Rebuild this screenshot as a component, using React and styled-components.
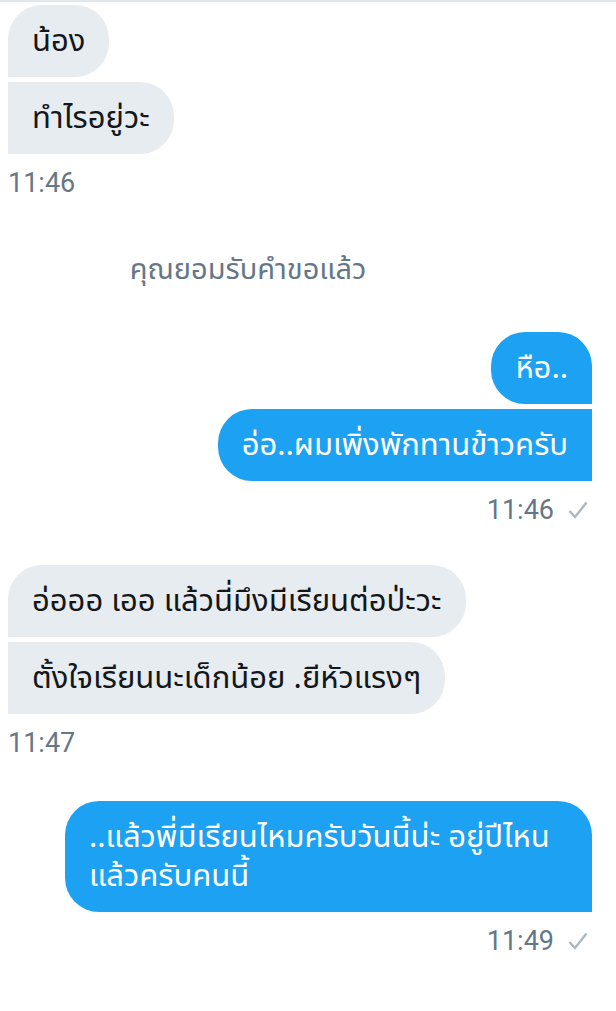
import styled, { createGlobalStyle } from "styled-components";

const GlobalStyle = createGlobalStyle`
  html, body {
    margin: 0;
    padding: 0;
    background: #ffffff;
  }
  body {
    font-family: "Noto Sans Thai", "Noto Sans", Roboto, sans-serif;
  }
`;

const Page = styled.div`
  width: 616px;
  min-height: 1011px;
  box-sizing: border-box;
  border-top: 2px solid #e1e8ed;
  padding: 3px 24px 0 8px;
  display: flex;
  flex-direction: column;
`;

const Group = styled.div`
  display: flex;
  flex-direction: column;
  align-items: ${(p) => (p.$mine ? "flex-end" : "flex-start")};
  gap: 5px;
  margin-top: ${(p) => p.$top || 0}px;
`;

const Bubble = styled.div`
  box-sizing: border-box;
  padding: 17px 24px 16px;
  font-size: 31px;
  line-height: 39px;
  max-width: 527px;
  background: ${(p) => (p.$mine ? "#1da1f2" : "#e6ecf0")};
  color: ${(p) => (p.$mine ? "#ffffff" : "#14171a")};
  border-radius: ${(p) => {
    const r = 34;
    const first = p.$first;
    if (p.$mine) {
      return `${r}px ${first ? r : 0}px 0 ${r}px`;
    }
    return `${first ? r : 0}px ${r}px ${r}px 0`;
  }};
`;

const Time = styled.div`
  display: flex;
  align-items: center;
  gap: 14px;
  margin-top: 9px;
  font-family: Roboto, "Noto Sans", sans-serif;
  font-size: 27px;
  line-height: 30px;
  color: #657786;
`;

const Check = styled.svg`
  width: 20px;
  height: 18px;
  margin-right: 4px;
`;

const System = styled.div`
  margin-top: 57px;
  padding-right: 104px;
  text-align: center;
  font-size: 29px;
  line-height: 30px;
  color: #657786;
`;

function Tick() {
  return (
    <Check viewBox="0 0 20 18">
      <polyline points="1.5,10 7,16 18.5,1.5" fill="none" stroke="#aab8c2" strokeWidth="2.4" />
    </Check>
  );
}

function Conversation({ mine, top, messages, time }) {
  return (
    <Group $mine={mine} $top={top}>
      {messages.map((text, idx) => (
        <Bubble key={idx} $mine={mine} $first={idx === 0}>
          {text}
        </Bubble>
      ))}
      <Time>
        {time}
        {mine && <Tick />}
      </Time>
    </Group>
  );
}

export default function App() {
  return (
    <>
      <GlobalStyle />
      <Page>
        <Conversation messages={["น้อง", "ทำไรอยู่วะ"]} time="11:46" />
        <System>คุณยอมรับคำขอแล้ว</System>
        <Conversation
          mine
          top={47}
          messages={["หือ..", "อ่อ..ผมเพิ่งพักทานข้าวครับ"]}
          time="11:46"
        />
        <Conversation
          top={40}
          messages={["อ่อออ เออ แล้วนี่มึงมีเรียนต่อป่ะวะ", "ตั้งใจเรียนนะเด็กน้อย .ยีหัวแรงๆ"]}
          time="11:47"
        />
        <Conversation
          mine
          top={43}
          messages={["..แล้วพี่มีเรียนไหมครับวันนี้น่ะ อยู่ปีไหน แล้วครับคนนี้"]}
          time="11:49"
        />
      </Page>
    </>
  );
}
